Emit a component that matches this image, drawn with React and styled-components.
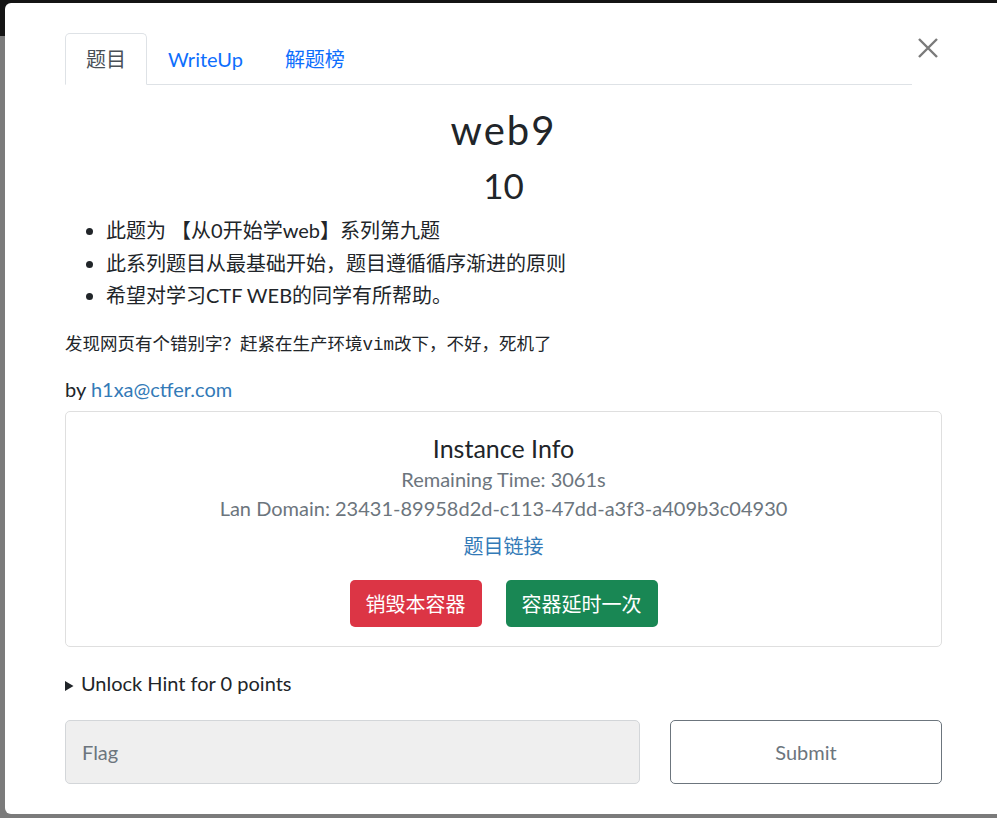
import styled, { createGlobalStyle } from "styled-components";

const GlobalStyle = createGlobalStyle`
  html, body {
    margin: 0;
    overflow: hidden;
    background: #7b7b7b;
  }
  * {
    box-sizing: border-box;
  }
`;

const tabs = [
  { label: "题目", active: true },
  { label: "WriteUp" },
  { label: "解题榜" },
];

const notes = [
  "此题为 【从0开始学web】系列第九题",
  "此系列题目从最基础开始，题目遵循循序渐进的原则",
  "希望对学习CTF WEB的同学有所帮助。",
];

function App() {
  return (
    <>
      <GlobalStyle />
      <Page>
        <Navbar />
        <Modal>
          <Header>
            <Tabs>
              {tabs.map((t) => (
                <Tab key={t.label} $active={t.active}>
                  {t.label}
                </Tab>
              ))}
            </Tabs>
            <Close aria-label="Close">
              <svg width="22" height="22" viewBox="0 0 22 22">
                <path d="M2 2 L20 20 M20 2 L2 20" stroke="#7a7a7a" strokeWidth="2.4" />
              </svg>
            </Close>
          </Header>

          <Title>web9</Title>
          <Value>10</Value>

          <Notes>
            {notes.map((n) => (
              <li key={n}>{n}</li>
            ))}
          </Notes>

          <Pre>发现网页有个错别字？赶紧在生产环境vim改下，不好，死机了</Pre>

          <Author>
            by <Link href="#">h1xa@ctfer.com</Link>
          </Author>

          <Card>
            <CardTitle>Instance Info</CardTitle>
            <Muted>Remaining Time: 3061s</Muted>
            <Muted>Lan Domain: 23431-89958d2d-c113-47dd-a3f3-a409b3c04930</Muted>
            <CardLink href="#">题目链接</CardLink>
            <Actions>
              <ActionButton $color="#dc3545">销毁本容器</ActionButton>
              <ActionButton $color="#198754">容器延时一次</ActionButton>
            </Actions>
          </Card>

          <Hint>
            <summary>Unlock Hint for 0 points</summary>
          </Hint>

          <SubmitRow>
            <FlagInput placeholder="Flag" />
            <SubmitButton>Submit</SubmitButton>
          </SubmitRow>
        </Modal>
      </Page>
    </>
  );
}

export default App;

const Page = styled.div`
  position: relative;
  height: 818px;
  font-family: Lato, "Noto Sans CJK SC", sans-serif;
  color: #212529;
`;

const Navbar = styled.div`
  height: 36px;
  background: #141414;
`;

const Modal = styled.div`
  position: absolute;
  top: 3px;
  left: 5px;
  width: 997px;
  background: #fff;
  border-radius: 6px;
  padding: 30px 60px;
`;

const Header = styled.div`
  display: flex;
  align-items: flex-start;
`;

const Tabs = styled.div`
  flex: 1;
  display: flex;
  border-bottom: 1px solid #dee2e6;
`;

const Tab = styled.div`
  padding: 10px 20px;
  font-size: 20px;
  line-height: 30px;
  margin-bottom: -1px;
  border: 1px solid transparent;
  border-radius: 5px 5px 0 0;
  color: ${(p) => (p.$active ? "#495057" : "#0d6efd")};
  ${(p) => p.$active && "background: #fff; border-color: #dee2e6 #dee2e6 #fff;"}
`;

const Close = styled.div`
  width: 30px;
  height: 22px;
  margin-top: 4px;
  display: flex;
  justify-content: flex-end;
  padding-right: 3px;
`;

const Title = styled.h2`
  margin: 21px 0 0;
  text-align: center;
  font-size: 40px;
  font-weight: 400;
  line-height: 1.2;
  letter-spacing: 2px;
`;

const Value = styled.h3`
  margin: 10px 0 0;
  text-align: center;
  font-size: 35px;
  font-weight: 400;
  line-height: 1.2;
`;

const Notes = styled.ul`
  margin: 8px 0 0;
  padding-left: 41px;
  font-size: 20px;
  line-height: 32.5px;
`;

const Pre = styled.pre`
  margin: 20px 0 0;
  font-family: "Liberation Mono", "Noto Sans CJK SC", monospace;
  font-size: 17.5px;
  line-height: 26px;
  color: #212529;
`;

const Author = styled.div`
  margin-top: 16px;
  font-size: 20px;
  line-height: 30px;
`;

const Link = styled.a`
  color: #337ab7;
  text-decoration: none;
`;

const Card = styled.div`
  margin-top: 7px;
  border: 1px solid #dfdfdf;
  border-radius: 5px;
  padding: 21px 25px 19px;
  display: flex;
  flex-direction: column;
  align-items: center;
  text-align: center;
`;

const CardTitle = styled.h5`
  margin: 0;
  font-size: 25px;
  font-weight: 400;
  line-height: 30px;
`;

const Muted = styled.div`
  font-size: 20px;
  line-height: 29px;
  color: #6c757d;
  &:first-of-type {
    margin-top: 2px;
  }
`;

const CardLink = styled(Link)`
  margin-top: 8px;
  font-size: 20px;
  line-height: 30px;
`;

const Actions = styled.div`
  display: flex;
  gap: 24px;
  margin-top: 19px;
`;

const ActionButton = styled.button`
  height: 47px;
  padding: 0 16px;
  border: none;
  border-radius: 5px;
  background: ${(p) => p.$color};
  color: #fff;
  font-family: inherit;
  font-size: 20px;
`;

const Hint = styled.details`
  margin-top: 21px;
  font-size: 20px;
  line-height: 30px;
  summary {
    cursor: pointer;
  }
  summary::marker {
    font-size: 15px;
  }
`;

const SubmitRow = styled.div`
  display: grid;
  grid-template-columns: 575px 1fr;
  gap: 30px;
  margin-top: 20px;
`;

const FlagInput = styled.input`
  height: 64px;
  padding: 0 16px;
  border: 1px solid #d3d6d9;
  border-radius: 5px;
  background: #efefef;
  font-family: inherit;
  font-size: 20px;
  color: #495057;
  &::placeholder {
    color: #6c757d;
  }
`;

const SubmitButton = styled.button`
  height: 64px;
  border: 1px solid #6c757d;
  border-radius: 5px;
  background: #fff;
  color: #6c757d;
  font-family: inherit;
  font-size: 20px;
`;
